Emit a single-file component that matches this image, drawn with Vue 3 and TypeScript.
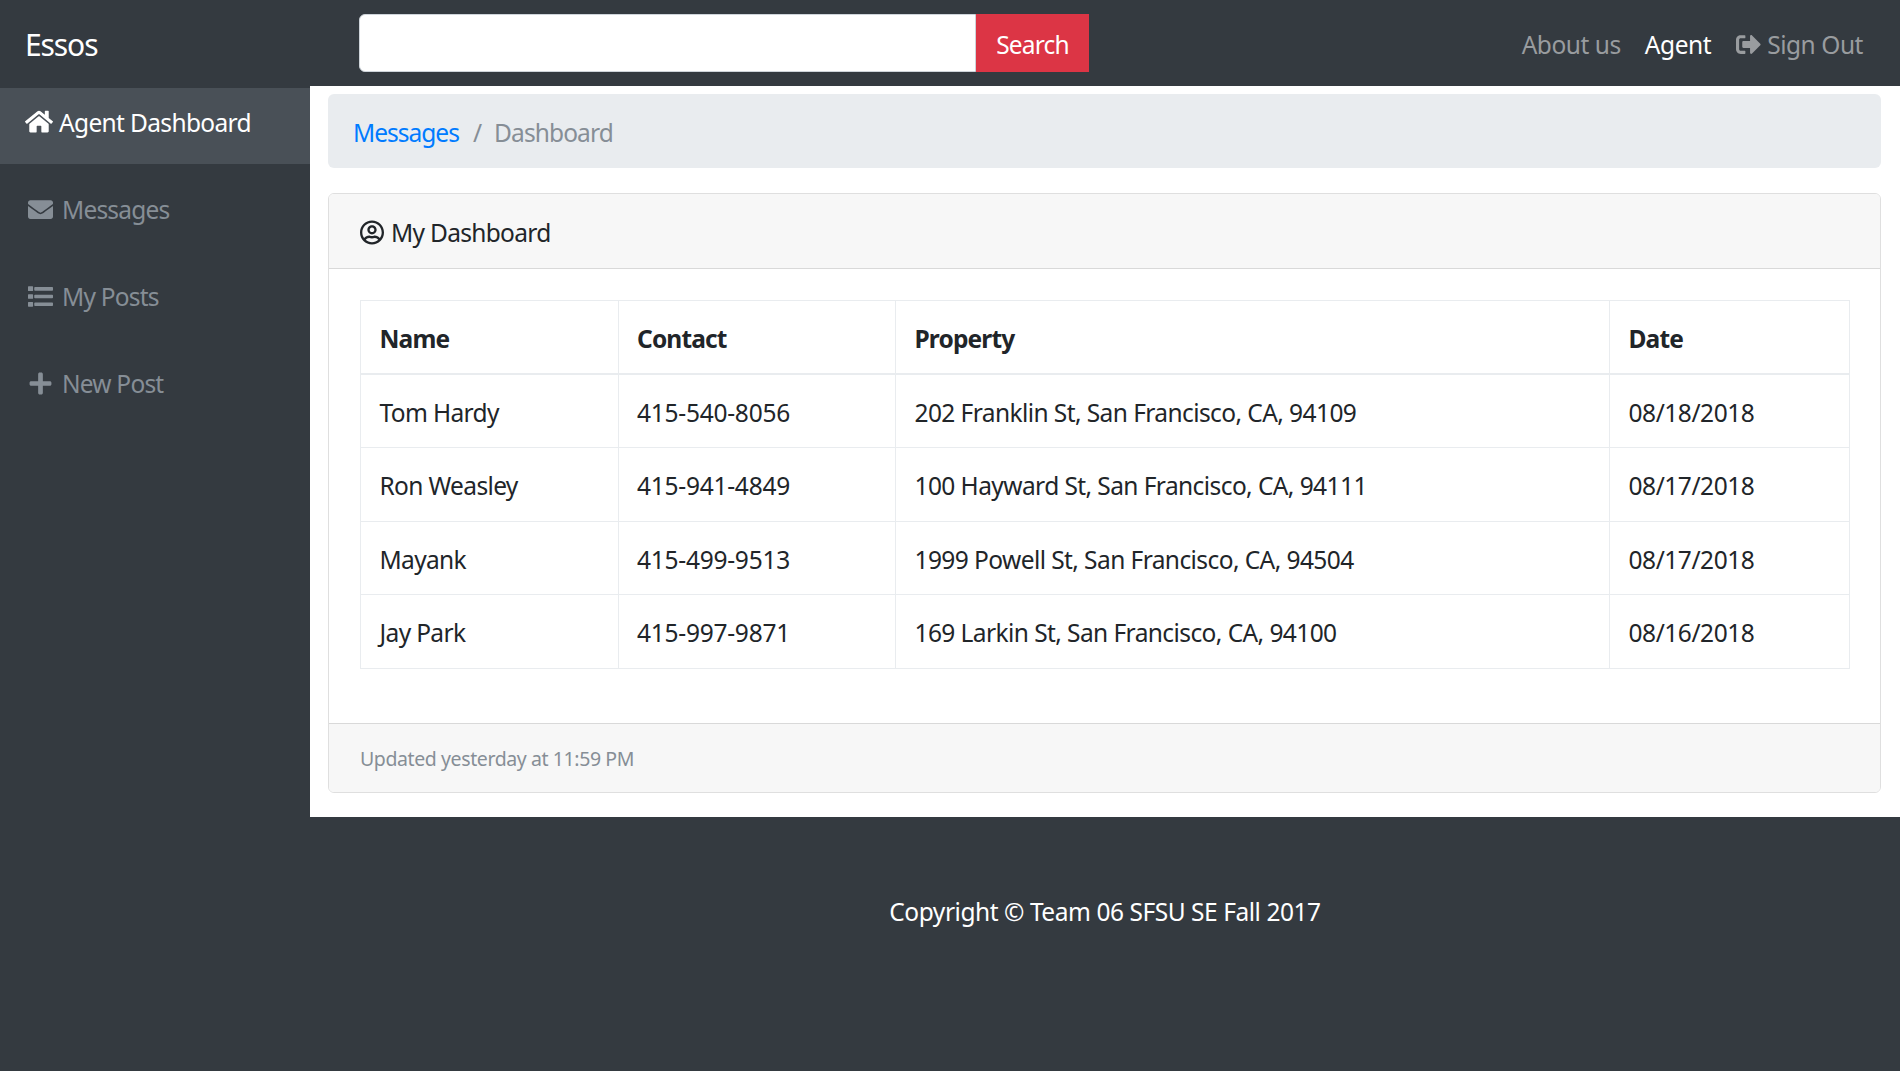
<script setup lang="ts">
interface MenuItem {
  label: string
  icon: string
  viewBox: string
  active?: boolean
}

interface Message {
  name: string
  contact: string
  property: string
  date: string
}

const menu: MenuItem[] = [
  {
    label: 'Agent Dashboard',
    viewBox: '0 0 576 512',
    active: true,
    icon: 'M488 312.7V456c0 13.3-10.7 24-24 24H348c-6.6 0-12-5.4-12-12V356c0-6.600-5.400-12-12-12h-72c-6.600 0-12 5.400-12 12v112c0 6.600-5.400 12-12 12H112c-13.300 0-24-10.700-24-24V312.700c0-3.600 1.600-7 4.400-9.300l188-154.800c4.400-3.600 10.800-3.600 15.300 0l188 154.800c2.700 2.300 4.300 5.700 4.300 9.300zm83.600-60.900L488 182.900V44.400c0-6.600-5.400-12-12-12h-56c-6.600 0-12 5.400-12 12V117l-89.500-73.700c-17.700-14.600-43.300-14.600-61 0L4.400 251.800c-5.100 4.200-5.800 11.800-1.600 16.900l25.500 31c4.200 5.100 11.800 5.800 16.900 1.600l235.200-193.700c4.400-3.600 10.800-3.600 15.300 0l235.200 193.700c5.100 4.200 12.700 3.500 16.900-1.600l25.500-31c4.200-5.200 3.400-12.700-1.700-16.900z',
  },
  {
    label: 'Messages',
    viewBox: '0 0 512 512',
    icon: 'M502.300 190.800c3.900-3.100 9.700-.2 9.700 4.700V400c0 26.500-21.500 48-48 48H48c-26.500 0-48-21.500-48-48V195.600c0-5 5.700-7.800 9.700-4.700 22.400 17.400 52.100 39.500 154.100 113.600 21.100 15.400 56.700 47.800 92.200 47.600 35.700.3 72-32.800 92.300-47.600 102-74.100 131.600-96.300 154-113.700zM256 320c23.200.4 56.600-29.200 73.400-41.400 132.700-96.300 142.800-104.700 173.400-128.700 5.800-4.500 9.200-11.500 9.200-18.900v-19c0-26.500-21.500-48-48-48H48c-26.500 0-48 21.500-48 48v19c0 7.400 3.400 14.300 9.200 18.900 30.600 23.900 40.700 32.400 173.400 128.700 16.800 12.200 50.200 41.800 73.400 41.400z',
  },
  {
    label: 'My Posts',
    viewBox: '0 0 512 512',
    icon: 'M12 48h80a12 12 0 0 1 12 12v72a12 12 0 0 1-12 12H12a12 12 0 0 1-12-12V60a12 12 0 0 1 12-12zM12 208h80a12 12 0 0 1 12 12v72a12 12 0 0 1-12 12H12a12 12 0 0 1-12-12v-72a12 12 0 0 1 12-12zM12 368h80a12 12 0 0 1 12 12v72a12 12 0 0 1-12 12H12a12 12 0 0 1-12-12v-72a12 12 0 0 1 12-12zM144 60h352a16 16 0 0 1 16 16v48a16 16 0 0 1-16 16H144a16 16 0 0 1-16-16V76a16 16 0 0 1 16-16zM144 220h352a16 16 0 0 1 16 16v40a16 16 0 0 1-16 16H144a16 16 0 0 1-16-16v-40a16 16 0 0 1 16-16zM144 380h352a16 16 0 0 1 16 16v40a16 16 0 0 1-16 16H144a16 16 0 0 1-16-16v-40a16 16 0 0 1 16-16z',
  },
  {
    label: 'New Post',
    viewBox: '-32 0 512 512',
    icon: 'M416 208H272V64c0-17.700-14.300-32-32-32h-32c-17.700 0-32 14.300-32 32v144H32c-17.700 0-32 14.300-32 32v32c0 17.700 14.300 32 32 32h144v144c0 17.700 14.300 32 32 32h32c17.700 0 32-14.300 32-32V304h144c17.700 0 32-14.300 32-32v-32c0-17.700-14.300-32-32-32z',
  },
]

const messages: Message[] = [
  { name: 'Tom Hardy', contact: '415-540-8056', property: '202 Franklin St, San Francisco, CA, 94109', date: '08/18/2018' },
  { name: 'Ron Weasley', contact: '415-941-4849', property: '100 Hayward St, San Francisco, CA, 94111', date: '08/17/2018' },
  { name: 'Mayank', contact: '415-499-9513', property: '1999 Powell St, San Francisco, CA, 94504', date: '08/17/2018' },
  { name: 'Jay Park', contact: '415-997-9871', property: '169 Larkin St, San Francisco, CA, 94100', date: '08/16/2018' },
]
</script>

<template>
  <div class="page">
    <header class="navbar">
      <a class="brand">Essos</a>
      <form class="search" @submit.prevent>
        <input class="search-input" type="text" aria-label="Search" />
        <button class="search-button" type="submit">Search</button>
      </form>
      <nav class="links">
        <a class="about">About us</a>
        <a class="agent">Agent</a>
        <a class="sign-out">
          <svg class="icon" viewBox="0 0 512 512">
            <path d="M497 273L329 441c-15 15-41 4.500-41-17v-96H152c-13.300 0-24-10.700-24-24v-96c0-13.300 10.700-24 24-24h136V88c0-21.400 25.900-32 41-17l168 168c9.300 9.400 9.300 24.600 0 34zM192 436v-40c0-6.600-5.400-12-12-12H96c-17.700 0-32-14.300-32-32V160c0-17.700 14.300-32 32-32h84c6.600 0 12-5.400 12-12V76c0-6.600-5.400-12-12-12H96c-53 0-96 43-96 96v192c0 53 43 96 96 96h84c6.600 0 12-5.400 12-12z" />
          </svg>
          <span>Sign Out</span>
        </a>
      </nav>
    </header>

    <div class="body">
      <aside class="sidebar">
        <a v-for="item in menu" :key="item.label" class="menu-item" :class="{ active: item.active }">
          <svg class="icon" :viewBox="item.viewBox"><path :d="item.icon" /></svg>
          <span>{{ item.label }}</span>
        </a>
      </aside>

      <div class="column">
        <main class="content">
          <div class="breadcrumb">
            <a class="crumb-link">Messages</a>
            <span class="slash">/</span>
            <span class="crumb">Dashboard</span>
          </div>

          <section class="card">
            <div class="card-header">
              <svg class="icon" viewBox="0 0 496 512">
                <path d="M248 104c-53 0-96 43-96 96s43 96 96 96 96-43 96-96-43-96-96-96zm0 144c-26.500 0-48-21.500-48-48s21.500-48 48-48 48 21.500 48 48-21.500 48-48 48zm0-240C111 8 0 119 0 256s111 248 248 248 248-111 248-248S385 8 248 8zm0 448c-49.700 0-95.100-18.300-130.100-48.400 14.900-23 40.400-38.600 69.600-39.500 20.800 6.400 40.600 9.600 60.500 9.600s39.700-3.100 60.500-9.600c29.200 1 54.700 16.500 69.600 39.500-35 30.100-80.400 48.400-130.100 48.400zm162.700-84.100c-24.400-31.400-62.100-51.900-105.100-51.900-10.200 0-26 9.600-57.600 9.600-31.500 0-47.400-9.600-57.600-9.600-42.900 0-80.600 20.500-105.100 51.900C61.900 339.200 48 299.200 48 256c0-110.300 89.700-200 200-200s200 89.700 200 200c0 43.200-13.900 83.200-37.300 115.900z" />
              </svg>
              <span>My Dashboard</span>
            </div>
            <div class="card-body">
              <table>
                <colgroup>
                  <col class="col-name" />
                  <col class="col-contact" />
                  <col class="col-property" />
                  <col />
                </colgroup>
                <thead>
                  <tr>
                    <th>Name</th>
                    <th>Contact</th>
                    <th>Property</th>
                    <th>Date</th>
                  </tr>
                </thead>
                <tbody>
                  <tr v-for="message in messages" :key="message.contact">
                    <td class="name">{{ message.name }}</td>
                    <td class="contact">{{ message.contact }}</td>
                    <td class="property">{{ message.property }}</td>
                    <td class="date">{{ message.date }}</td>
                  </tr>
                </tbody>
              </table>
            </div>
            <div class="card-footer">Updated yesterday at 11:59 PM</div>
          </section>
        </main>
        <footer class="copyright">Copyright © Team 06 SFSU SE Fall 2017</footer>
      </div>
    </div>
  </div>
</template>

<style>
body {
  margin: 0;
  background: #343a40;
}
</style>

<style scoped>
.page {
  height: 1071px;
  overflow: hidden;
  background: #343a40;
  color: #212529;
  font-family: 'Segoe UI', 'Noto Sans', sans-serif;
  font-size: 24.5px;
  line-height: 36px;
  letter-spacing: -0.45px;
  white-space: nowrap;
}

.icon {
  display: block;
  flex: none;
  fill: currentColor;
}

.navbar {
  display: flex;
  box-sizing: border-box;
  height: 86px;
  padding: 14px 37px 0 25px;
}

.brand {
  width: 334px;
  padding-top: 13px;
  color: #fff;
  font-size: 30px;
  letter-spacing: -1.1px;
}

.search {
  display: flex;
  height: 58px;
}

.search-input {
  box-sizing: border-box;
  width: 617px;
  border: 1px solid #ced4da;
  border-radius: 6px 0 0 6px;
  background: #fff;
}

.search-button {
  width: 113px;
  padding: 3px 0 0;
  border: 0;
  background: #dc3545;
  color: #fff;
  font: inherit;
  letter-spacing: -0.8px;
}

.links {
  display: flex;
  flex: 1;
  justify-content: flex-end;
  padding-top: 13px;
  color: #999c9f;
}

.agent {
  margin: 0 25px 0 24px;
  color: #fff;
}

.sign-out {
  display: flex;
}

.sign-out .icon {
  width: 25px;
  height: 25px;
  margin: 5px 6px 0 0;
}

.body {
  display: flex;
}

.sidebar {
  flex: none;
  width: 310px;
  padding-top: 2px;
}

.menu-item {
  display: flex;
  box-sizing: border-box;
  height: 76px;
  margin-bottom: 11px;
  padding: 17px 0 0 28px;
  color: #868e96;
  letter-spacing: -0.8px;
}

.menu-item .icon {
  width: 25px;
  height: 25px;
  margin: 5px 9px 0 0;
}

.menu-item.active {
  padding-left: 25px;
  background: #495057;
  color: #fff;
  letter-spacing: -0.65px;
}

.menu-item.active .icon {
  width: 28px;
  margin: 4px 6px 0 0;
}

.column {
  flex: 1;
  min-width: 0;
}

.content {
  box-sizing: border-box;
  height: 731px;
  padding: 8px 19px 0 18px;
  background: #fff;
}

.breadcrumb {
  display: flex;
  box-sizing: border-box;
  height: 74px;
  margin-bottom: 25px;
  padding: 21px 25px;
  border-radius: 6px;
  background: #e9ecef;
  color: #868e96;
  letter-spacing: -0.9px;
}

.crumb-link {
  color: #007bff;
  letter-spacing: -1px;
}

.slash {
  margin: 0 13px 0 14px;
}

.card {
  display: flex;
  flex-direction: column;
  box-sizing: border-box;
  height: 600px;
  border: 1px solid #dfdfdf;
  border-radius: 6px;
}

.card-header {
  display: flex;
  box-sizing: border-box;
  height: 75px;
  padding: 21px 31px 0;
  border-bottom: 1px solid #d9d9d9;
  border-radius: 5px 5px 0 0;
  background: #f7f7f7;
  letter-spacing: -0.7px;
}

.card-header .icon {
  width: 24px;
  height: 25px;
  margin: 5px 7px 0 0;
}

.card-body {
  flex: 1;
  padding: 31px 30px 0 31px;
}

table {
  width: 1490px;
  border-collapse: collapse;
  table-layout: fixed;
}

.col-name {
  width: 257.5px;
}

.col-contact {
  width: 277.5px;
}

.col-property {
  width: 714px;
}

th,
td {
  box-sizing: border-box;
  height: 73.5px;
  padding: 4px 18px 0 18.5px;
  border: 1px solid #e9ecef;
  text-align: left;
}

th {
  letter-spacing: -0.85px;
}

thead th {
  border-bottom: 2px solid #e9ecef;
}

.name {
  letter-spacing: -0.65px;
}

.contact {
  letter-spacing: -0.25px;
}

.property {
  letter-spacing: -0.58px;
}

.card-footer {
  box-sizing: border-box;
  height: 69px;
  padding: 17px 31px 0;
  border-top: 1px solid #d9d9d9;
  border-radius: 0 0 5px 5px;
  background: #f7f7f7;
  color: #868e96;
  font-size: 19.5px;
  letter-spacing: -0.4px;
}

.copyright {
  padding-top: 77px;
  color: #fff;
  text-align: center;
}
</style>
